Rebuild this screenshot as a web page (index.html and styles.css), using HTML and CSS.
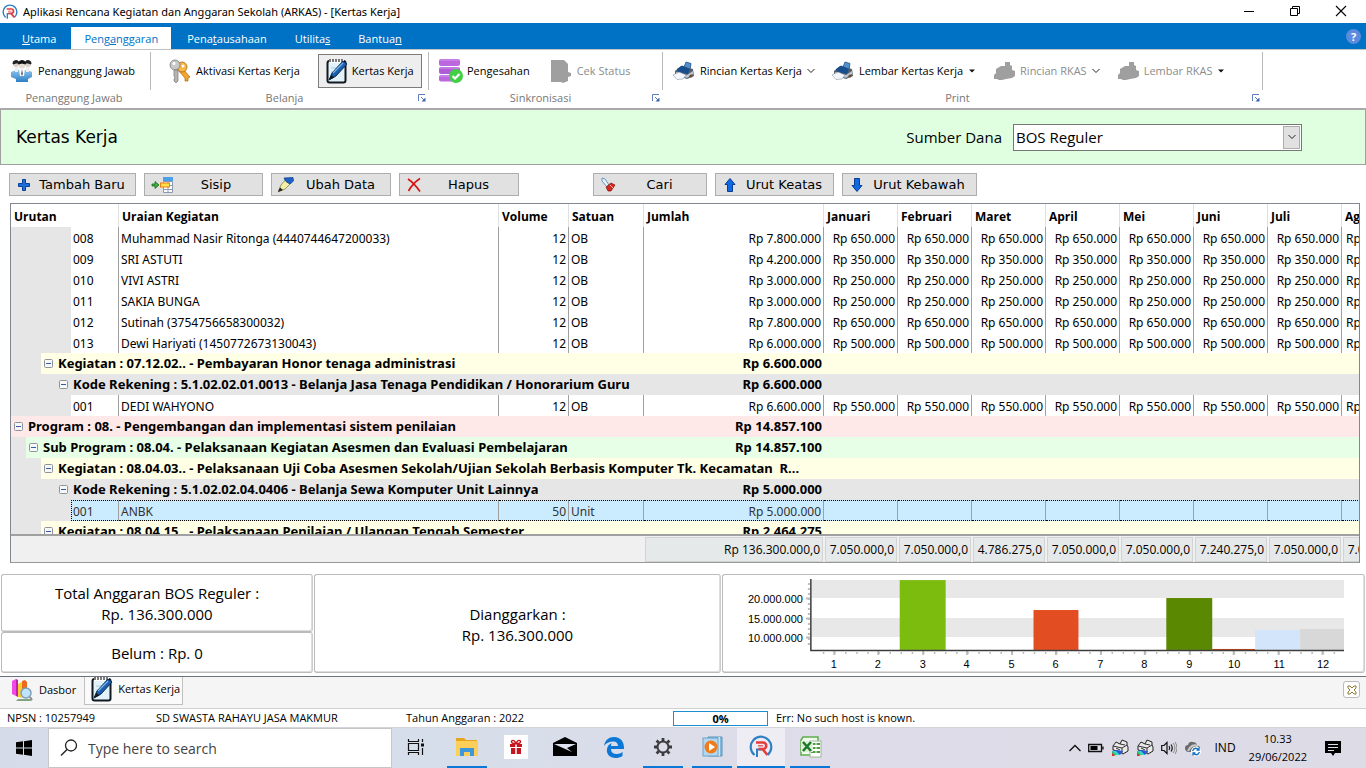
FILE: index.html
```html
<!DOCTYPE html>
<html lang="id">
<head>
<meta charset="utf-8">
<title>ARKAS - Kertas Kerja</title>
<link rel="stylesheet" href="styles.css">
</head>
<body>
<svg class="defs" aria-hidden="true">
  <defs>
    <linearGradient id="sky" x1="0" y1="0" x2="0" y2="1"><stop offset="0" stop-color="#8cc4ee"/><stop offset="1" stop-color="#2d7fc4"/></linearGradient>
    <symbol id="logo" viewBox="0 0 24 24">
      <path d="M5.500 20A10.300 10.300 0 1 1 18.500 20" fill="none" stroke="#2f7fc3" stroke-width="2.200"/>
      <path d="M8 22V14.500H13" fill="none" stroke="#2f7fc3" stroke-width="2"/>
      <path d="M7 7.500H14A3.200 3.200 0 0 1 14 14H9.500M13.500 14L18.500 20" fill="none" stroke="#e33d3d" stroke-width="2.600"/>
      <path d="M9 10.800H14" stroke="#e33d3d" stroke-width="1.200"/>
    </symbol>
    <symbol id="notepad" viewBox="0 0 22 26">
      <rect x="1.500" y="3" width="18" height="21.500" rx="2" fill="#e2f2fa" stroke="#101820" stroke-width="2"/>
      <path d="M3 3.500H18" stroke="#fff" stroke-width="3"/>
      <path d="M4 1V4M7 1V4M10 1V4M13 1V4M16 1V4" stroke="#333" stroke-width="1.300"/>
      <path d="M5 10H14M5 14H12M5 18H10" stroke="#a9cfe2"/>
      <path d="M3 22L6 15L17 3L21 6L10 18Z" fill="#1b5fae" stroke="#0c2850" stroke-width="1"/>
      <path d="M7 15L17 5" stroke="#7cb8ee" stroke-width="1.300"/>
      <path d="M3 22L5.500 17L8.500 19.500Z" fill="#101820"/>
    </symbol>
    <symbol id="printer" viewBox="0 0 22 20">
      <path d="M11 6L13 1L18 2.500L17 9Z" fill="#4f91cf" stroke="#27517e" stroke-width=".8"/>
      <path d="M2 10L8 5L20 8L21 15L14 18L2 14Z" fill="#56606c"/>
      <path d="M4 8L9 4.500L17 8L15 13L5 11Z" fill="#174f8e"/>
      <path d="M3 11L14 14L20 10L20 13L14 17L3 13Z" fill="#b9c5d1"/>
      <path d="M0 14L6 11L13 14L10 18L4 18.500Z" fill="#f4f8fc" stroke="#8c98a4" stroke-width=".6"/>
      <circle cx="18" cy="15" r="1.500" fill="#6b4a2a"/>
    </symbol>
    <symbol id="printer-off" viewBox="0 0 22 20">
      <path d="M1 17V14L3 12V8L8 5L12 5V1H17V4L19 5V9L22 10V15L19 17L13 18L9 19H6L4 18H1Z" fill="#9f9f9f"/>
    </symbol>
    <symbol id="chevron" viewBox="0 0 8 6"><path d="M.5 1L4 4.500L7.500 1" fill="none" stroke="#222"/></symbol>
    <symbol id="caret" viewBox="0 0 8 6"><path d="M1 1.500H7L4 4.500Z" fill="#111"/></symbol>
    <symbol id="launcher" viewBox="0 0 8 8"><path d="M.5 7V.5H7M3 3L6 6" fill="none" stroke="#5b7fc0"/><path d="M7.500 3.500V7.500H3.500Z" fill="#3e66b0"/></symbol>
    <symbol id="minus" viewBox="0 0 9 9"><rect x=".5" y=".5" width="8" height="8" rx="1" fill="#f6f7f9" stroke="#8f949b"/><path d="M2 4.500H7" stroke="#3a5aa8"/></symbol>
    <symbol id="arrow" viewBox="0 0 14 16"><path d="M7 1.500L12 7.500H9.500V14.500H4.500V7.500H2Z" fill="#0f6be0" stroke="#0a3c94"/></symbol>
    <symbol id="device" viewBox="0 0 18 18">
      <path d="M2 7L5 3L9 5L11 1L16 3V6L17 8V12L12 15L7 12L2 11Z" fill="#e9e9e9" stroke="#222"/>
      <path d="M2 7L11 9L16 6M11 9V14M9 5L14 6M5 9L9 11" fill="none" stroke="#333"/>
      <path d="M1 12L5 11L12 12L9 16H2Z" fill="#2a56d8"/><path d="M1 12H5L9 16H3Z" fill="#35d6c0"/><path d="M1 12L5 16L2 17Z" fill="#35b53a"/><path d="M1 14L4 17H1Z" fill="#e02a2a"/>
    </symbol>
  </defs>
</svg>

<header class="titlebar">
  <svg class="i16"><use href="#logo"/></svg>
  <h1>Aplikasi Rencana Kegiatan dan Anggaran Sekolah (ARKAS) - [Kertas Kerja]</h1>
  <div class="window-buttons">
    <button aria-label="Minimize"><svg class="i12" viewBox="0 0 12 12"><path d="M1 6.500H11" stroke="#000"/></svg></button>
    <button aria-label="Restore"><svg class="i12" viewBox="0 0 12 12"><path d="M1.500 3.500H8.500V10.500H1.500ZM3.500 3V1.500H10.500V8.500H9" fill="none" stroke="#000"/></svg></button>
    <button aria-label="Close"><svg class="i12" viewBox="0 0 12 12"><path d="M1 1L11 11M11 1L1 11" stroke="#000" stroke-width="1.100"/></svg></button>
  </div>
</header>

<nav class="menu">
  <button class="menu-tab"><u>U</u>tama</button>
  <button class="menu-tab active">Peng<u>a</u>nggaran</button>
  <button class="menu-tab">Pena<u>t</u>ausahaan</button>
  <button class="menu-tab">Utilita<u>s</u></button>
  <button class="menu-tab">Bantua<u>n</u></button>
  <button class="help" aria-label="Help">?</button>
</nav>

<section class="ribbon">
  <div class="group group-a">
    <div class="tools">
      <button class="tool"><svg class="i24" viewBox="0 0 24 24"><path d="M1 13L6 11H18L22 13V18L18 20V23H6V20L1 18Z" fill="url(#sky)"/><circle cx="6" cy="5" r="3" fill="#d9d0c8"/><circle cx="18" cy="5" r="3" fill="#d9d0c8"/><path d="M3 5A3 3 0 0 1 9 4L6 4ZM15 4A3 3 0 0 1 21 5L18 4Z" fill="#222" stroke="#222"/><path d="M5 8H8V13H5ZM16 8H19V13H16Z" fill="#eee"/><circle cx="12" cy="6" r="3.500" fill="#e5dcd4"/><path d="M8.500 5A3.500 3.500 0 0 1 15.500 5L12 4Z" fill="#111" stroke="#111"/><path d="M9 10H15L14 17H10Z" fill="#fff"/><path d="M12 10L13 15L12 17L11 15Z" fill="#667"/></svg>Penanggung Jawab</button>
    </div>
    <div class="caption"><span>Penanggung Jawab</span></div>
  </div>
  <div class="group group-b">
    <div class="tools">
      <button class="tool"><svg class="i24" viewBox="0 0 24 24"><path d="M9 10L17 19L17 22L20 22V19L22 18L14 9Z" fill="#f3a52e" stroke="#a96b12" stroke-width=".7"/><circle cx="14" cy="8" r="5" fill="#f7b645" stroke="#a96b12" stroke-width=".8"/><circle cx="15" cy="7" r="1.500" fill="#fff"/><circle cx="7" cy="6" r="5" fill="#c9c9c9" stroke="#777" stroke-width=".8"/><circle cx="6" cy="4.500" r="1.500" fill="#fff"/><path d="M6 11H10V22L8 24L6 22V20L7 19L6 17Z" fill="#b5b5b5" stroke="#777" stroke-width=".7"/></svg>Aktivasi Kertas Kerja</button>
      <button class="tool pressed"><svg class="note"><use href="#notepad"/></svg>Kertas Kerja</button>
    </div>
    <div class="caption"><span>Belanja</span><svg class="i8"><use href="#launcher"/></svg></div>
  </div>
  <div class="group group-c">
    <div class="tools">
      <button class="tool"><svg class="i24" viewBox="0 0 24 24"><rect x="0" y="0" width="21" height="7" rx="2" fill="#bd67df"/><rect x="0" y="8" width="21" height="7" rx="2" fill="#b25bd6"/><rect x="0" y="16" width="21" height="6.500" rx="2" fill="#bd67df"/><path d="M1 1H20M1 9H20M1 17H20" stroke="#d496ee"/><circle cx="17" cy="17" r="7" fill="#43cf45"/><path d="M13.500 17L16 19.500L20.500 15" fill="none" stroke="#fff" stroke-width="2.200"/></svg>Pengesahan</button>
      <button class="tool off" disabled><svg class="i24" viewBox="0 0 24 24"><path d="M2 1H15L19 5V13L22 14V17L19 18V22L14 24L12 23H2Z" fill="#9f9f9f"/></svg>Cek Status</button>
    </div>
    <div class="caption"><span>Sinkronisasi</span><svg class="i8"><use href="#launcher"/></svg></div>
  </div>
  <div class="group group-d">
    <div class="tools">
      <button class="tool"><svg class="prn"><use href="#printer"/></svg>Rincian Kertas Kerja<svg class="drop"><use href="#chevron"/></svg></button>
      <button class="tool"><svg class="prn"><use href="#printer"/></svg>Lembar Kertas Kerja<svg class="drop"><use href="#caret"/></svg></button>
      <button class="tool off" disabled><svg class="prn"><use href="#printer-off"/></svg>Rincian RKAS<svg class="drop"><use href="#chevron"/></svg></button>
      <button class="tool off" disabled><svg class="prn"><use href="#printer-off"/></svg>Lembar RKAS<svg class="drop"><use href="#caret"/></svg></button>
    </div>
    <div class="caption"><span>Print</span><svg class="i8"><use href="#launcher"/></svg></div>
  </div>
</section>

<main class="work">
  <section class="heading">
    <h2>Kertas Kerja</h2>
    <label for="dana">Sumber Dana</label>
    <div class="select-box">
      <select id="dana"><option>BOS Reguler</option></select>
      <span class="select-arrow"><svg class="drop"><use href="#chevron"/></svg></span>
    </div>
  </section>

  <div class="actions">
    <button class="act w-l"><svg class="i16" viewBox="0 0 16 16"><path d="M6.500 2.500H9.500V6.500H13.500V9.500H9.500V13.500H6.500V9.500H2.500V6.500H6.500Z" fill="#1a6fdc" stroke="#0c3f96"/></svg><span>Tambah Baru</span></button>
    <button class="act w-m"><svg class="wide" viewBox="0 0 22 16"><path d="M1 7H4V4.500L8 8L4 11.500V9H1Z" fill="#3fae3f" stroke="#146c14" stroke-width=".8"/><rect x="12" y="0" width="10" height="4" fill="#4aa0ea"/><path d="M12.500 4.500H21.500V15.500H12.500ZM12 8.500H22M12 12.500H22M17 4V16" fill="#fff" stroke="#8a9bb0"/><rect x="9.500" y="6" width="9" height="4" fill="#ffe14a" stroke="#f07c12"/></svg><span>Sisip</span></button>
    <button class="act w-n"><svg class="i16" viewBox="0 0 16 16"><path d="M0 15L3 8L8 2L13 6L7 12Z" fill="#f4efa4" stroke="#77713b" stroke-width=".7"/><path d="M0 15L2 10.500L5 13Z" fill="#222"/><path d="M6 1L15 .5L15.500 4L12 7Q7 5 6 1Z" fill="#1c62c8" stroke="#0f3a86" stroke-width=".7"/></svg><span>Ubah Data</span></button>
    <button class="act w-n"><svg class="i16" viewBox="0 0 16 16"><path d="M2 2Q8 6 14 14.500M14 1.500Q7 6 2.500 14" fill="none" stroke="#d81414" stroke-width="1.700"/></svg><span>Hapus</span></button>
    <button class="act w-s gap"><svg class="i16" viewBox="0 0 16 16"><path d="M2 1L5 2L9 8L7 10L2 4Z" fill="#e6f2fd" stroke="#6d96bd"/><path d="M6 10L11 6L15 8L11 14L8 14Z" fill="#d5291d" stroke="#7c120c" stroke-width=".7"/><path d="M10 8L13 11" stroke="#ffb4a8"/></svg><span>Cari</span></button>
    <button class="act w-m"><svg class="i16"><use href="#arrow"/></svg><span>Urut Keatas</span></button>
    <button class="act w-x"><svg class="i16 flip"><use href="#arrow"/></svg><span>Urut Kebawah</span></button>
  </div>

  <section class="grid">
    <div class="grid-scroll">
      <table>
        <colgroup><col class="c-no"><col class="c-name"><col class="c-vol"><col class="c-unit"><col class="c-sum"><col class="c-mon" span="8"></colgroup>
        <thead><tr><th>Urutan</th><th>Uraian Kegiatan</th><th>Volume</th><th>Satuan</th><th>Jumlah</th><th>Januari</th><th>Februari</th><th>Maret</th><th>April</th><th>Mei</th><th>Juni</th><th>Juli</th><th>Agustus</th></tr></thead>
        <tbody>
          <tr class="item"><td>008</td><td>Muhammad Nasir Ritonga (4440744647200033)</td><td>12</td><td>OB</td><td>Rp 7.800.000</td><td>Rp 650.000</td><td>Rp 650.000</td><td>Rp 650.000</td><td>Rp 650.000</td><td>Rp 650.000</td><td>Rp 650.000</td><td>Rp 650.000</td><td>Rp 650.000</td></tr>
          <tr class="item"><td>009</td><td>SRI ASTUTI</td><td>12</td><td>OB</td><td>Rp 4.200.000</td><td>Rp 350.000</td><td>Rp 350.000</td><td>Rp 350.000</td><td>Rp 350.000</td><td>Rp 350.000</td><td>Rp 350.000</td><td>Rp 350.000</td><td>Rp 350.000</td></tr>
          <tr class="item"><td>010</td><td>VIVI ASTRI</td><td>12</td><td>OB</td><td>Rp 3.000.000</td><td>Rp 250.000</td><td>Rp 250.000</td><td>Rp 250.000</td><td>Rp 250.000</td><td>Rp 250.000</td><td>Rp 250.000</td><td>Rp 250.000</td><td>Rp 250.000</td></tr>
          <tr class="item"><td>011</td><td>SAKIA BUNGA</td><td>12</td><td>OB</td><td>Rp 3.000.000</td><td>Rp 250.000</td><td>Rp 250.000</td><td>Rp 250.000</td><td>Rp 250.000</td><td>Rp 250.000</td><td>Rp 250.000</td><td>Rp 250.000</td><td>Rp 250.000</td></tr>
          <tr class="item"><td>012</td><td>Sutinah (3754756658300032)</td><td>12</td><td>OB</td><td>Rp 7.800.000</td><td>Rp 650.000</td><td>Rp 650.000</td><td>Rp 650.000</td><td>Rp 650.000</td><td>Rp 650.000</td><td>Rp 650.000</td><td>Rp 650.000</td><td>Rp 650.000</td></tr>
          <tr class="item"><td>013</td><td>Dewi Hariyati (1450772673130043)</td><td>12</td><td>OB</td><td>Rp 6.000.000</td><td>Rp 500.000</td><td>Rp 500.000</td><td>Rp 500.000</td><td>Rp 500.000</td><td>Rp 500.000</td><td>Rp 500.000</td><td>Rp 500.000</td><td>Rp 500.000</td></tr>
          <tr class="node kegiatan"><td colspan="4"><svg class="i9"><use href="#minus"/></svg>Kegiatan : 07.12.02.. - Pembayaran Honor tenaga administrasi</td><td>Rp 6.600.000</td><td colspan="8"></td></tr>
          <tr class="node kode"><td colspan="4"><svg class="i9"><use href="#minus"/></svg>Kode Rekening : 5.1.02.02.01.0013 - Belanja Jasa Tenaga Pendidikan / Honorarium Guru</td><td>Rp 6.600.000</td><td colspan="8"></td></tr>
          <tr class="item"><td>001</td><td>DEDI WAHYONO</td><td>12</td><td>OB</td><td>Rp 6.600.000</td><td>Rp 550.000</td><td>Rp 550.000</td><td>Rp 550.000</td><td>Rp 550.000</td><td>Rp 550.000</td><td>Rp 550.000</td><td>Rp 550.000</td><td>Rp 550.000</td></tr>
          <tr class="node program"><td colspan="4"><svg class="i9"><use href="#minus"/></svg>Program : 08. - Pengembangan dan implementasi sistem penilaian</td><td>Rp 14.857.100</td><td colspan="8"></td></tr>
          <tr class="node sub"><td colspan="4"><svg class="i9"><use href="#minus"/></svg>Sub Program : 08.04. - Pelaksanaan Kegiatan Asesmen dan Evaluasi Pembelajaran</td><td>Rp 14.857.100</td><td colspan="8"></td></tr>
          <tr class="node kegiatan"><td colspan="5"><svg class="i9"><use href="#minus"/></svg>Kegiatan : 08.04.03.. - Pelaksanaan Uji Coba Asesmen Sekolah/Ujian Sekolah Berbasis Komputer Tk. Kecamatan &nbsp;R...</td><td colspan="8"></td></tr>
          <tr class="node kode"><td colspan="4"><svg class="i9"><use href="#minus"/></svg>Kode Rekening : 5.1.02.02.04.0406 - Belanja Sewa Komputer Unit Lainnya</td><td>Rp 5.000.000</td><td colspan="8"></td></tr>
          <tr class="item selected"><td><span>001</span></td><td>ANBK</td><td>50</td><td>Unit</td><td>Rp 5.000.000</td><td></td><td></td><td></td><td></td><td></td><td></td><td></td><td></td></tr>
          <tr class="node kegiatan"><td colspan="4"><svg class="i9"><use href="#minus"/></svg>Kegiatan : 08.04.15.. - Pelaksanaan Penilaian / Ulangan Tengah Semester</td><td>Rp 2.464.275</td><td colspan="8"></td></tr>
        </tbody>
      </table>
    </div>
    <div class="totals">
      <span>Rp 136.300.000,0</span><span>7.050.000,0</span><span>7.050.000,0</span><span>4.786.275,0</span><span>7.050.000,0</span><span>7.050.000,0</span><span>7.240.275,0</span><span>7.050.000,0</span><span>7.050.000,0</span>
    </div>
  </section>

  <section class="summary">
    <div class="stack">
      <div class="panel tall"><p>Total Anggaran BOS Reguler :</p><p>Rp. 136.300.000</p></div>
      <div class="panel"><p>Belum : Rp. 0</p></div>
    </div>
    <div class="panel middle"><p>Dianggarkan :</p><p>Rp. 136.300.000</p></div>
    <div class="panel chart">
      <svg viewBox="1 0 642 98" role="img" aria-label="Anggaran per bulan">
        <path d="M90 5H623V23H90ZM90 43H623V62H90Z" fill="#e8e8e8"/>
        <rect x="178" y="5" width="46" height="70" fill="#7cbc0f"/>
        <rect x="312" y="35" width="45" height="40" fill="#e34d22"/>
        <rect x="445" y="23" width="46" height="52" fill="#5a8800"/>
        <rect x="491" y="74" width="43" height="1" fill="#c8410a"/>
        <rect x="534" y="55" width="45" height="20" fill="#d3e5fa"/>
        <rect x="579" y="54" width="44" height="21" fill="#d8d8d8"/>
        <path d="M84 23.500H88M84 43.500H88M84 62.500H88" stroke="#bbb" stroke-width="2"/>
        <path d="M87 8V73" stroke="#bbb" stroke-width="2" stroke-dasharray="2 3"/>
        <path d="M101 78H622" stroke="#bbb" stroke-width="2" stroke-dasharray="1.500 9.620"/>
        <path d="M112.500 76V80M156.500 76V80M201.500 76V80M245.500 76V80M290.500 76V80M334.500 76V80M379.500 76V80M423.500 76V80M468.500 76V80M512.500 76V80M557.500 76V80M601.500 76V80" stroke="#bbb" stroke-width="2"/>
        <path d="M89 4V75.500H623" fill="none" stroke="#3c3c3c" stroke-width="1.500"/>
        <g class="axis-y"><text x="81" y="28">20.000.000</text><text x="81" y="48">15.000.000</text><text x="81" y="67">10.000.000</text></g>
        <g class="axis-x"><text x="112" y="93">1</text><text x="156" y="93">2</text><text x="201" y="93">3</text><text x="245" y="93">4</text><text x="290" y="93">5</text><text x="334" y="93">6</text><text x="379" y="93">7</text><text x="423" y="93">8</text><text x="468" y="93">9</text><text x="513" y="93">10</text><text x="558" y="93">11</text><text x="602" y="93">12</text></g>
      </svg>
    </div>
  </section>
</main>

<nav class="windows">
  <button class="win"><svg class="i24" viewBox="0 0 24 24"><path d="M2 3L6 1V18L2 16Z" fill="#f04ae4"/><path d="M6 1L8 2V19L6 18Z" fill="#c01fae"/><path d="M8 6L12 4V20L8 19Z" fill="#ffce2e"/><path d="M12 3L15 2L17 4V13L12 17Z" fill="#ea6a1e"/><path d="M8 21H20L22 23H6Z" fill="#7fa37f"/><circle cx="16" cy="15" r="5" fill="#bfe3fa" stroke="#7d9fb8" stroke-width="1.500"/><path d="M20 19L22 22" stroke="#8b8b8b" stroke-width="2"/></svg>Dasbor</button>
  <button class="win current"><svg class="note"><use href="#notepad"/></svg>Kertas Kerja</button>
  <button class="close-all" aria-label="Tutup"><svg class="i10" viewBox="0 0 10 10"><path d="M1 1H3L5 3L7 1H9V3L7 5L9 7V9H7L5 7L3 9H1V7L3 5L1 3Z" fill="#fff" stroke="#8b7a2e"/></svg></button>
</nav>

<footer class="status">
  <span class="s-npsn">NPSN : 10257949</span><span class="s-school">SD SWASTA RAHAYU JASA MAKMUR</span><span class="s-year">Tahun Anggaran : 2022</span>
  <span class="progress">0%</span><span>Err: No such host is known.</span>
</footer>

<div class="taskbar">
  <button class="start" aria-label="Start"><svg class="i16" viewBox="0 0 16 16"><path d="M0 2.300L7 1.300V7.500H0ZM8 1.200L16 0V7.500H8ZM0 8.500H7V14.700L0 13.700ZM8 8.500H16V16L8 14.800Z"/></svg></button>
  <label class="search"><svg class="i18" viewBox="0 0 18 18"><circle cx="11" cy="6.500" r="5.500" fill="none" stroke="#222" stroke-width="1.300"/><path d="M7 10.500L1 16.500" stroke="#222" stroke-width="1.400"/></svg><input type="text" placeholder="Type here to search" aria-label="Search"></label>
  <div class="apps">
    <button class="app view" aria-label="Task view"><svg class="i18" viewBox="0 0 18 18"><path d="M1.500 1V3.500H11.500V1M1.500 17V14.500H11.500V17M1.500 5.500H11.500V12.500H1.500ZM15.500 1V4M15.500 10V17" fill="none" stroke="#111" stroke-width="1.200"/><rect x="14" y="5.500" width="3" height="3" fill="#111"/></svg></button>
    <button class="app open" aria-label="File Explorer"><svg class="i24" viewBox="0 0 24 24"><path d="M1 3H9L11 5H22V20H1Z" fill="#e5a51f"/><rect x="1" y="6" width="22" height="15" fill="#fccf5b"/><path d="M5 21V13H19V21H15V17H9V21Z" fill="#3e97d8"/></svg></button>
    <button class="app" aria-label="Gift"><svg class="i24" viewBox="0 0 24 24"><rect width="24" height="24" fill="#fff"/><path d="M6 9H18V12H6ZM7 13H17V19H7Z" fill="#c6161d"/><path d="M12 9V19" stroke="#fff" stroke-width="1.500"/><path d="M12 8.500Q7 9 7.500 6Q10 4 12 8.500Q14 4 16.500 6Q17 9 12 8.500" fill="none" stroke="#c6161d" stroke-width="1.400"/></svg></button>
    <button class="app" aria-label="Mail"><svg class="i24" viewBox="0 0 24 24"><path d="M0 8L12 2L24 8V21H0Z"/><path d="M1 9L23 9L14 13L19 17Z" fill="#dde2ee"/></svg></button>
    <button class="app" aria-label="Edge"><svg class="i24" viewBox="0 0 24 24"><path d="M2 11C3 5 7 2 12 2C19 2 22 7 22 13V14H9C9 18 12 19 15 19C17 19 19 18 20.500 17V21C18 22.500 16 23 13.500 23C8 23 4 19 5 14C5.500 11 7 9 10 8C9 9 9 10 9 11H16C16 8 14 6.500 11.500 6.500C7 6.500 4 8 2 11Z" fill="#0b78d7"/></svg></button>
    <button class="app open" aria-label="Settings"><svg class="i20" viewBox="0 0 20 20"><circle cx="10" cy="10" r="5.500" fill="none" stroke="#3b3b3f" stroke-width="2"/><path d="M10 1V4M10 16V19M1 10H4M16 10H19M3.600 3.600L5.700 5.700M14.300 14.300L16.400 16.400M16.400 3.600L14.300 5.700M5.700 14.300L3.600 16.400" stroke="#3b3b3f" stroke-width="2.800"/></svg></button>
    <button class="app open" aria-label="Media player"><svg class="i24" viewBox="0 0 24 24"><path d="M8 2H22V21H8Z" fill="#83b7dc" stroke="#5b94bd"/><path d="M19 2V21" stroke="#c7e3f5" stroke-width="2"/><rect x="3" y="3" width="15" height="18" fill="#b2d7ee" stroke="#6da3c8"/><circle cx="11" cy="12" r="6.500" fill="#f17a1a"/><path d="M9 8L15 12L9 16Z" fill="#fff"/></svg></button>
    <button class="app open focus" aria-label="ARKAS"><svg class="i24"><use href="#logo"/></svg></button>
    <button class="app open" aria-label="Excel"><svg class="i24" viewBox="0 0 24 24"><path d="M5 2H20V20H3V5Z" fill="#f2faee" stroke="#5fae4c" stroke-width="1.500"/><rect x="12" y="6" width="11" height="16" fill="#fff" stroke="#9ab894"/><path d="M13 9H22M13 13H22M13 17H22" stroke="#4f9c45" stroke-width="2"/><path d="M18 7V21" stroke="#fff"/><rect x="3" y="6" width="12" height="11" fill="#dff0d8"/><path d="M5 7L13 16M13 7L5 16" stroke="#1d7a2c" stroke-width="2.600"/></svg></button>
  </div>
  <div class="tray">
    <svg class="i12" viewBox="0 0 12 12"><path d="M.5 9L6 3.500L11.500 9" fill="none" stroke="#111" stroke-width="1.300"/></svg>
    <svg class="i16" viewBox="0 0 16 16"><path d="M.7 4.500H13.500V11.500H.7ZM15 6.500V9.500" fill="none" stroke="#111" stroke-width="1.300"/><rect x="2.500" y="6" width="7" height="4"/></svg>
    <svg class="i18"><use href="#device"/></svg>
    <svg class="i18"><use href="#device"/></svg>
    <svg class="i16" viewBox="0 0 16 16"><path d="M.7 5.500H3L6 2.500V13.500L3 10.500H.7ZM8 6Q9.500 8 8 10M10 4.500Q12.500 8 10 11.500" fill="none" stroke="#111" stroke-width="1.200"/><path d="M12 3Q16 8 12 13M14 2Q18 8 14 14" fill="none" stroke="#888"/></svg>
    <svg class="i18" viewBox="0 0 18 18"><path d="M1 9Q1 6 4 6Q5 2 9 3Q12 3 13 6Q16 7 16 9L8 13H4Q1 12 1 9Z" fill="#6c6c6c"/><path d="M4 12Q8 4 14 7" fill="none" stroke="#c9c9c9" stroke-width="2"/><circle cx="12" cy="12.500" r="5" fill="#fff"/><path d="M8.500 12Q10 8.500 13 9.500L15 11M15.500 13Q14 16.500 11 15.500L9 14M15 8.500V11H12.500M9 16.500V14H11.500" fill="none" stroke="#0f6ec4" stroke-width="1.300"/></svg>
    <span>IND</span>
    <div class="clock"><span>10.33</span><span>29/06/2022</span></div>
    <svg class="i18" viewBox="0 0 18 18"><path d="M1 2H17V14H11L9 17L7 14H1Z"/><path d="M4 5.500H14M4 8.500H14M4 11.500H10" stroke="#dedeea"/></svg>
  </div>
</div>
</body>
</html>
```
FILE: styles.css
```css
* { box-sizing: border-box; }
body {
  margin: 0;
  min-height: 100vh;
  display: flex;
  flex-direction: column;
  overflow-x: hidden;
  background: #fff;
  color: #000;
  font: 11px/16px "Open Sans", "Noto Sans", sans-serif;
}
h1, h2, p { margin: 0; font-weight: 400; }
button { margin: 0; padding: 0; border: 0; background: none; font: inherit; color: inherit; }
svg { display: block; flex: none; }
.defs { position: absolute; width: 0; height: 0; }
.i8 { width: 8px; height: 8px; }
.i9 { width: 9px; height: 9px; }
.i10 { width: 10px; height: 10px; }
.i12 { width: 12px; height: 12px; }
.i16 { width: 16px; height: 16px; }
.i18 { width: 18px; height: 18px; }
.i20 { width: 20px; height: 20px; }
.i24 { width: 24px; height: 24px; }
.note { width: 22px; height: 26px; }
.prn { width: 22px; height: 20px; }
.drop { width: 8px; height: 6px; }
.wide { width: 22px; height: 16px; }
.flip { transform: rotate(180deg); }

/* title bar */
.titlebar { display: flex; align-items: center; gap: 5px; height: 23px; padding-left: 2px; }
.titlebar h1 { font: 11px/16px "Noto Sans", sans-serif; }
.window-buttons { display: flex; margin: 0 2px 2px auto; }
.window-buttons button { width: 46px; height: 20px; display: grid; place-items: center; }

/* menu tabs */
.menu { display: flex; align-items: flex-end; height: 27px; background: #0072c6; color: #fff; border-bottom: 1px solid #c3c3c3; }
.menu-tab { height: 22px; padding: 1px 14px 0; }
.menu-tab:first-child { padding: 1px 15px 0 22px; }
.menu-tab.active { background: #fff; color: #0072c6; height: 22px; padding: 1px 13px 0; margin-right: 2px; }
.help { align-self: center; width: 15px; height: 15px; margin: 0 5px 0 auto; border-radius: 50%; background: #5b8ade; color: #fff; font-weight: 700; line-height: 15px; }

/* ribbon */
.ribbon { display: flex; height: 60px; border-bottom: 2px solid #a9a9a9; }
.group { display: flex; flex-direction: column; }
.group-a { width: 151px; }
.group-b { width: 278px; }
.group-c { width: 234px; }
.group-d { width: 600px; }
.tools { display: flex; align-items: center; height: 38px; margin-top: 2px; border-right: 1px solid #b8b8b8; }
.group-a .tools { padding-left: 10px; }
.group-b .tools { padding-left: 17px; gap: 18px; }
.group-c .tools { padding-left: 10px; gap: 19px; }
.group-d .tools { padding-left: 10px; gap: 17px; }
.tool { display: flex; align-items: center; gap: 4px; height: 34px; white-space: nowrap; }
.group-d .tool { gap: 5px; }
.tool.pressed { padding: 0 7px; background: #eee; border: 1px solid #7c7c7c; }
.tool.off { color: #8c8c8c; }
.caption { display: flex; align-items: center; height: 16px; padding-right: 3px; color: #777; }
.caption span { flex: 1; text-align: center; }

/* heading */
.work { flex: 1; display: flex; flex-direction: column; }
.heading { display: flex; align-items: center; height: 55px; padding: 0 63px 0 15px; background: #e0ffe0; border: 1px solid #a0a0a0; border-top: 0; font-size: 15px; }
.heading h2 { font: 17px/20px "DejaVu Sans", sans-serif; margin-right: auto; }
.select-box { position: relative; width: 289px; margin-left: 11px; }
.select-box select { appearance: none; display: block; width: 100%; height: 27px; padding: 0 2px; border: 1px solid #777; border-radius: 0; background: #fff; color: #000; font: 15px "Open Sans", sans-serif; }
.select-arrow { position: absolute; top: 2px; right: 2px; bottom: 2px; width: 17px; display: grid; place-items: center; background: #e1e1e1; border: 1px solid #adadad; pointer-events: none; }

/* action buttons */
.actions { display: flex; gap: 8px; height: 38px; padding: 8px 9px 0; }
.act { display: flex; align-items: center; height: 23px; padding: 0 3px 0 6px; background: #e1e1e1; border: 1px solid #adadad; font: 13px "DejaVu Sans", sans-serif; white-space: nowrap; }
.act span { flex: 1; text-align: center; }
.w-l { width: 127px; }
.w-x { width: 135px; }
.w-m { width: 119px; }
.w-n { width: 120px; }
.w-s { width: 114px; }
.gap { margin-left: 66px; }

/* data grid */
.grid { flex: 1; display: flex; flex-direction: column; margin: 0 6px 0 10px; border: 1px solid #828790; border-bottom-color: #999; overflow: hidden; font: 12px/18px "Open Sans", sans-serif; }
.grid-scroll { flex: 1 1 0; min-height: 330px; overflow: hidden; background: #fff; }
table { table-layout: fixed; width: 1405px; border-collapse: separate; border-spacing: 0; }
.c-no { width: 108px; }
.c-name { width: 380px; }
.c-vol { width: 70px; }
.c-unit { width: 75px; }
.c-sum { width: 180px; }
.c-mon { width: 74px; }
th { height: 23px; padding: 2px 3px 0; border-right: 1px solid #e0e0e0; text-align: left; font-weight: 700; }
td { height: 21px; padding: 2px 2px 0; white-space: nowrap; }
.item td { border-right: 1px solid #a0a0a0; text-align: right; font-family: "Noto Sans", sans-serif; }
.item td:nth-child(1) { border-left: 60px solid #e6e6e6; text-align: left; }
.item td:nth-child(2), .item td:nth-child(4) { text-align: left; }
.item td:last-child { padding-left: 4px; text-align: left; }
.item.selected td { padding-top: 2px; background: #cbebff; border-top: 1px dotted #000; border-bottom: 1px dotted #000; color: #333; line-height: 17px; }
.item.selected td:first-child { padding: 0; border-top: 0; border-bottom: 0; }
.selected span { display: block; height: 21px; padding: 2px 1px 0; border: 1px dotted #000; border-right: 0; }
.node { font: 700 13px/18px "Noto Sans", sans-serif; }
.node td { padding-top: 0; padding-bottom: 1px; }
.node td:nth-child(2) { text-align: right; }
.node td:first-child { border-left: 0 solid #e6e6e6; padding-left: 3px; }
.node .i9 { display: inline-block; margin-right: 5px; vertical-align: 0; }
.program td { background: #ffe8e8; }
.sub td { background: #e6ffe6; }
.kegiatan td { background: #ffffe6; }
.kode td { background: #e6e6e6; }
.node.sub td:first-child { border-left-width: 15px; }
.node.kegiatan td:first-child { border-left-width: 30px; }
.node.kode td:first-child { border-left-width: 45px; }
.totals { display: grid; grid-template-columns: 178px repeat(8, 72px); gap: 2px; height: 28px; padding: 1px 0 1px 634px; background: #f0f0f0; border-top: 2px solid #a0a0a0; }
.totals span { padding: 0 2px; border: 1px solid #d2d4d4; background: #e6e9e9; text-align: right; line-height: 23px; }

/* summary panels */
.summary { display: flex; gap: 1px; height: 114px; padding: 11px 1px 3px; font-size: 15px; line-height: 21px; border-bottom: 1px solid #6b7280; }
.stack { display: flex; flex-direction: column; width: 312px; }
.panel { display: flex; flex-direction: column; align-items: center; justify-content: center; flex: 1; padding-top: 2px; border: 1px solid #bbb; border-right-color: #ccc; border-radius: 3px; box-shadow: inset -1px -1px 0 #ddd; }
.panel.tall { flex: 0 0 58px; }
.panel.middle { flex: 0 0 407px; }
.panel.chart { padding-top: 0; }
.chart svg { width: 100%; height: 98px; font: 11px "Liberation Sans", sans-serif; }
.axis-y { text-anchor: end; }
.axis-x { text-anchor: middle; }

/* open windows */
.windows { display: flex; align-items: flex-start; height: 32px; padding-left: 10px; background: #f5f5f5; border-bottom: 1px solid #d0d0d0; }
.win { display: flex; align-items: center; gap: 5px; height: 28px; padding: 0 8px 3px 0; }
.win.current { padding: 0 2px 3px 6px; background: #fafafa; border: 1px solid #c0c0c0; border-top: 0; }
.close-all { width: 17px; height: 17px; margin: 4px 6px 0 auto; display: grid; place-items: center; border: 1px solid #bbb; border-radius: 3px; background: #fff; }

/* status line */
.status { display: flex; align-items: center; height: 18px; padding-left: 7px; background: #fff; white-space: nowrap; }
.s-npsn { width: 149px; }
.s-school { width: 250px; }
.s-year { width: 267px; }
.progress { width: 95px; height: 15px; margin-right: 8px; border: 1px solid #1b8fd2; text-align: center; font: 700 11px/14px "Open Sans", sans-serif; }

/* taskbar */
.taskbar { display: flex; height: 41px; background: linear-gradient(90deg, #d6dbe9, #d5deea 30%, #dedce8 60%, #dddbe6); border-top: 1px solid #d5d5d9; }
.start { width: 48px; display: grid; place-items: center; }
.search { display: flex; align-items: center; gap: 10px; width: 344px; padding-left: 11px; background: #fff; border: 1px solid #c7c7c7; }
.search input { flex: 1; min-width: 0; padding: 0; border: 0; outline: 0; background: none; font: 14px "Open Sans", sans-serif; }
.search input::placeholder { color: #444; opacity: 1; }
.apps { display: flex; gap: 1px; }
.app { width: 48px; display: grid; place-items: center; border-bottom: 2px solid transparent; }
.app.view { margin-right: 2px; }
.app.open { border-bottom-color: #0b78d7; width: 40px; margin: 0 4px; }
.app.focus { background: #eeedf4; width: 48px; margin: 0; }
.tray { display: flex; align-items: center; gap: 7px; margin: 0 24px 0 auto; font-size: 12px; }
.tray > span { margin: 0 6px; }
.clock { display: flex; flex-direction: column; align-items: center; line-height: 18px; font-size: 11px; margin-right: 10px; }
```
